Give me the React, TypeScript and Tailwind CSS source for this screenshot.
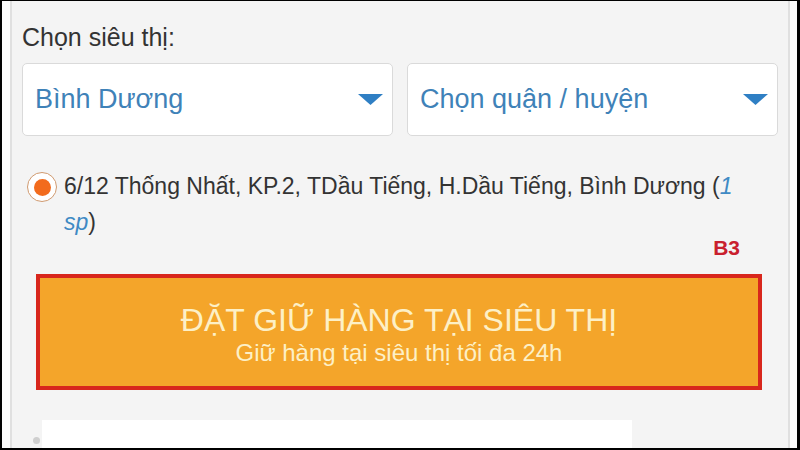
import React from 'react'

const font = { fontFamily: '"Liberation Sans", Arial, sans-serif' }

function Caret() {
  return (
    <svg width="25" height="11" viewBox="0 0 25 11" className="shrink-0">
      <path d="M0 0 H25 L12.5 11 Z" fill="#2f7fc4" />
    </svg>
  )
}

function Select({ label }: { label: string }) {
  return (
    <div className="flex-1 h-[73px] bg-white border border-[#dadada] rounded-[5px] flex items-center justify-between pl-[12px] pr-[9px]">
      <span className="text-[27px] text-[#3f82b8] leading-none">{label}</span>
      <Caret />
    </div>
  )
}

export default function App() {
  return (
    <div
      className="w-[800px] h-[450px] overflow-hidden flex bg-white border-l-2 border-t border-r-[3px] border-b-2 border-black"
      style={font}
    >
      {/* left gutter */}
      <div className="w-[8px] bg-[#fbfbfb]" />
      <div className="w-[2px] bg-[#e0e0e0]" />

      {/* main column */}
      <div className="flex-1 bg-[#f4f4f4] flex flex-col pl-[10px] pr-[10px]">
        <div className="mt-[23px] text-[25px] leading-[26px] text-[#333]">Chọn siêu thị:</div>

        <div className="mt-[13px] flex gap-[14px] shrink-0">
          <Select label="Bình Dương" />
          <Select label="Chọn quận / huyện" />
        </div>

        {/* store option */}
        <div className="mt-[35px] flex items-start shrink-0">
          <div className="ml-[5px] mt-[1px] w-[30px] h-[30px] rounded-full border-[1.5px] border-[#d09a70] bg-white flex items-center justify-center shrink-0">
            <div className="w-[17px] h-[17px] rounded-full bg-[#f26b1d]" />
          </div>
          <p className="ml-[7px] text-[23px] leading-[36px] text-[#333] -mt-[3px]">
            6/12 Thống Nhất, KP.2, TDầu Tiếng, H.Dầu Tiếng, Bình Dương (<i className="text-[#3f8ac4]">1</i>
            <br />
            <i className="text-[#3f8ac4]">sp</i>)
          </p>
        </div>

        <div className="self-end mr-[38px] -mt-[4px] text-[21px] leading-[24px] font-bold text-[#c9202e]">B3</div>

        {/* reserve button */}
        <div className="mt-[14px] ml-[14px] w-[726px] h-[116px] shrink-0 border-[4px] border-[#d8261c] bg-[#f4a52a] flex flex-col items-center pt-[24px] text-[#fdf0c6]">
          <div className="text-[32px] leading-[37px]">ĐẶT GIỮ HÀNG TẠI SIÊU THỊ</div>
          <div className="text-[24px] leading-[28px]">Giữ hàng tại siêu thị tối đa 24h</div>
        </div>

        {/* next item peeking */}
        <div className="mt-[30px] flex items-start shrink-0">
          <div className="ml-[11px] mt-[17px] w-[7px] h-[7px] rounded-full bg-[#cfcfcf]" />
          <div className="ml-[2px] w-[590px] h-[40px] bg-white" />
        </div>
      </div>

      {/* right gutter */}
      <div className="w-[2px] bg-[#e0e0e0]" />
      <div className="w-[7px] bg-[#fbfbfb]" />
    </div>
  )
}
